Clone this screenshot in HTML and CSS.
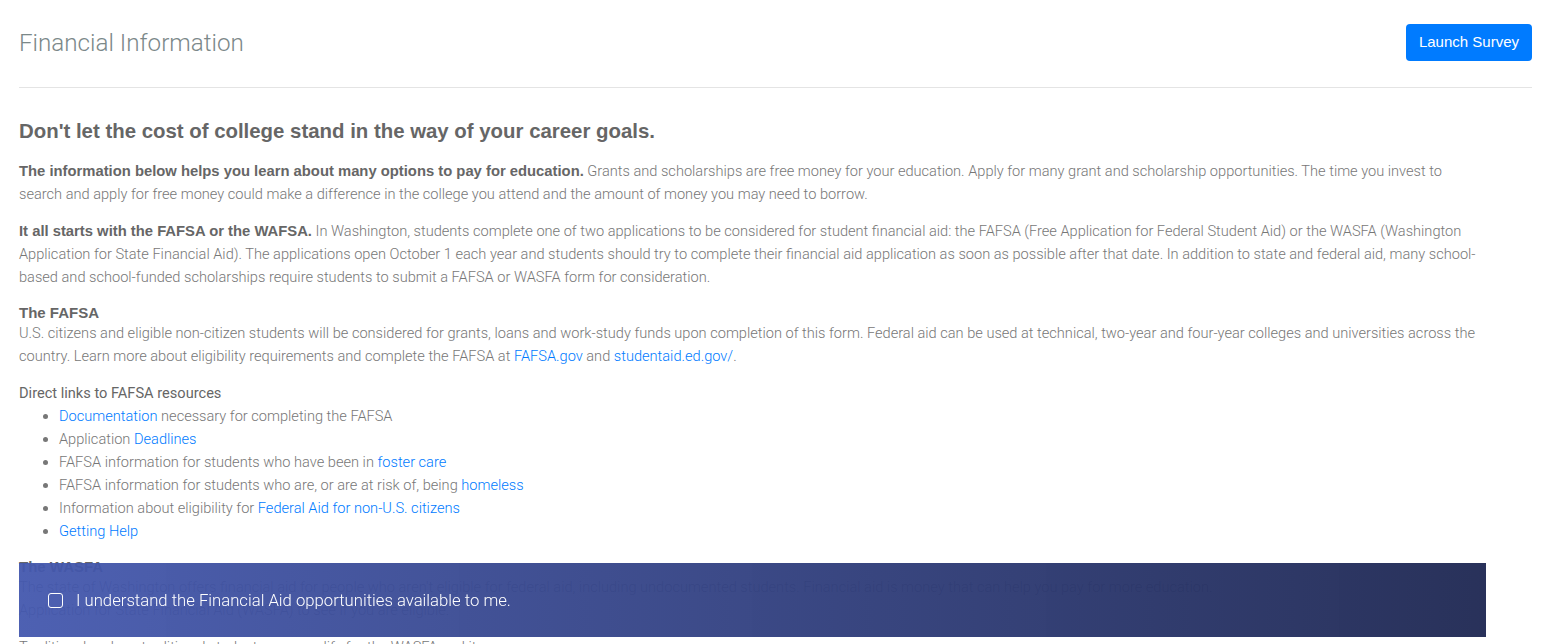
FILE: index.html
```html
<!DOCTYPE html>
<html lang="en">
<head>
    <meta charset="UTF-8">
    <meta name="viewport" content="width=device-width, initial-scale=1.0">
    <title>Financial Information</title>
    <link rel="stylesheet" href="styles.css">
</head>
<body>
    <div class="page">
        <div class="page-header">
            <h1>Financial Information</h1>
            <button class="btn-survey">Launch Survey</button>
        </div>
        <hr class="divider">

        <div class="content">
            <h4 class="lead">Don't let the cost of college stand in the way of your career goals.</h4>

            <p><strong>The information below helps you learn about many options to pay for education.</strong> Grants and scholarships are free money for your education. Apply for many grant and scholarship opportunities. The time you invest to search and apply for free money could make a difference in the college you attend and the amount of money you may need to borrow.</p>

            <p><strong>It all starts with the FAFSA or the WAFSA.</strong> In Washington, students complete one of two applications to be considered for student financial aid: the FAFSA (Free Application for Federal Student Aid) or the WASFA (Washington Application for State Financial Aid). The applications open October 1 each year and students should try to complete their financial aid application as soon as possible after that date. In addition to state and federal aid, many school-based and school-funded scholarships require students to submit a FAFSA or WASFA form for consideration.</p>

            <div class="section">
                <h5>The FAFSA</h5>
                <p>U.S. citizens and eligible non-citizen students will be considered for grants, loans and work-study funds upon completion of this form. Federal aid can be used at technical, two-year and four-year colleges and universities across the country. Learn more about eligibility requirements and complete the FAFSA at <a href="#">FAFSA.gov</a> and <a href="#">studentaid.ed.gov/</a>.</p>
            </div>

            <div class="section">
                <div class="list-title">Direct links to FAFSA resources</div>
                <ul class="links">
                    <li><a href="#">Documentation</a> necessary for completing the FAFSA</li>
                    <li>Application <a href="#">Deadlines</a></li>
                    <li>FAFSA information for students who have been in <a href="#">foster care</a></li>
                    <li>FAFSA information for students who are, or are at risk of, being <a href="#">homeless</a></li>
                    <li>Information about eligibility for <a href="#">Federal Aid for non-U.S. citizens</a></li>
                    <li><a href="#">Getting Help</a></li>
                </ul>
            </div>

            <div class="section">
                <h5>The WASFA</h5>
                <p>The state of Washington offers financial aid for people who aren't eligible for federal aid, including undocumented students. Financial aid is money that can help you pay for more education.<br>
                Application for State Financial Aid (WASFA) to see if you are eligible.</p>
                <p>Traditional and nontraditional students may qualify for the WASFA and its programs.</p>
            </div>
        </div>
    </div>

    <div class="confirm-bar">
        <label class="confirm">
            <input type="checkbox">
            <span>I understand the Financial Aid opportunities available to me.</span>
        </label>
    </div>
</body>
</html>
```

FILE: styles.css
```css
body {
    font-family: Roboto, "Liberation Sans", sans-serif;
    font-weight: 300;
    font-size: 14.6px;
    line-height: 23px;
    color: #777;
    margin: 0;
    padding: 0;
    background: #fff;
}
.page {
    padding: 24px 9px 40px 19px;
}
.page-header {
    display: flex;
    justify-content: space-between;
    align-items: center;
    height: 37px;
}
h1 {
    margin: 0 0 -2px 0;
    font-size: 24.2px;
    font-weight: 300;
    color: #7b8889;
}
.btn-survey {
    font-family: "Liberation Sans", sans-serif;
    background-color: #007bff;
    color: white;
    border: none;
    border-radius: 4px;
    height: 37px;
    padding: 0 13px 3px 13px;
    font-size: 15px;
    cursor: pointer;
}
.divider {
    border: 0;
    border-top: 1px solid #e4e4e4;
    margin: 26px 0 0 0;
}
.content {
    padding-right: 47px;
}
.lead {
    font-family: "Liberation Sans", sans-serif;
    font-size: 20.4px;
    font-weight: bold;
    line-height: 23px;
    color: #666;
    margin: 32px 0 17px 0;
}
p {
    margin: 0 0 14px 0;
}
strong {
    font-family: "Liberation Sans", sans-serif;
    font-size: 14.8px;
    font-weight: bold;
    color: #666;
}
a {
    color: #007bff;
    text-decoration: none;
}
.section {
    margin-bottom: 14px;
}
h5 {
    font-family: "Liberation Sans", sans-serif;
    font-size: 15px;
    font-weight: bold;
    color: #666;
    line-height: 19px;
    margin: 0;
}
.section p {
    margin: 0;
}
.section p + p {
    margin-top: 14px;
}
.list-title {
    font-weight: 400;
    color: #666;
}
.links {
    margin: 0;
    padding-left: 40px;
}
.confirm-bar {
    position: fixed;
    left: 19px;
    bottom: 7px;
    width: 1467px;
    height: 74px;
    display: flex;
    align-items: center;
    background: linear-gradient(to right, rgba(68, 88, 174, 0.95), rgba(34, 43, 85, 0.97));
}
.confirm {
    display: flex;
    align-items: center;
    gap: 13px;
    margin-left: 29px;
    color: #fff;
    font-size: 16.7px;
}
.confirm input {
    appearance: none;
    width: 15px;
    height: 15px;
    margin: 0;
    border: 1.5px solid #fff;
    border-radius: 3px;
    background: transparent;
}
```
